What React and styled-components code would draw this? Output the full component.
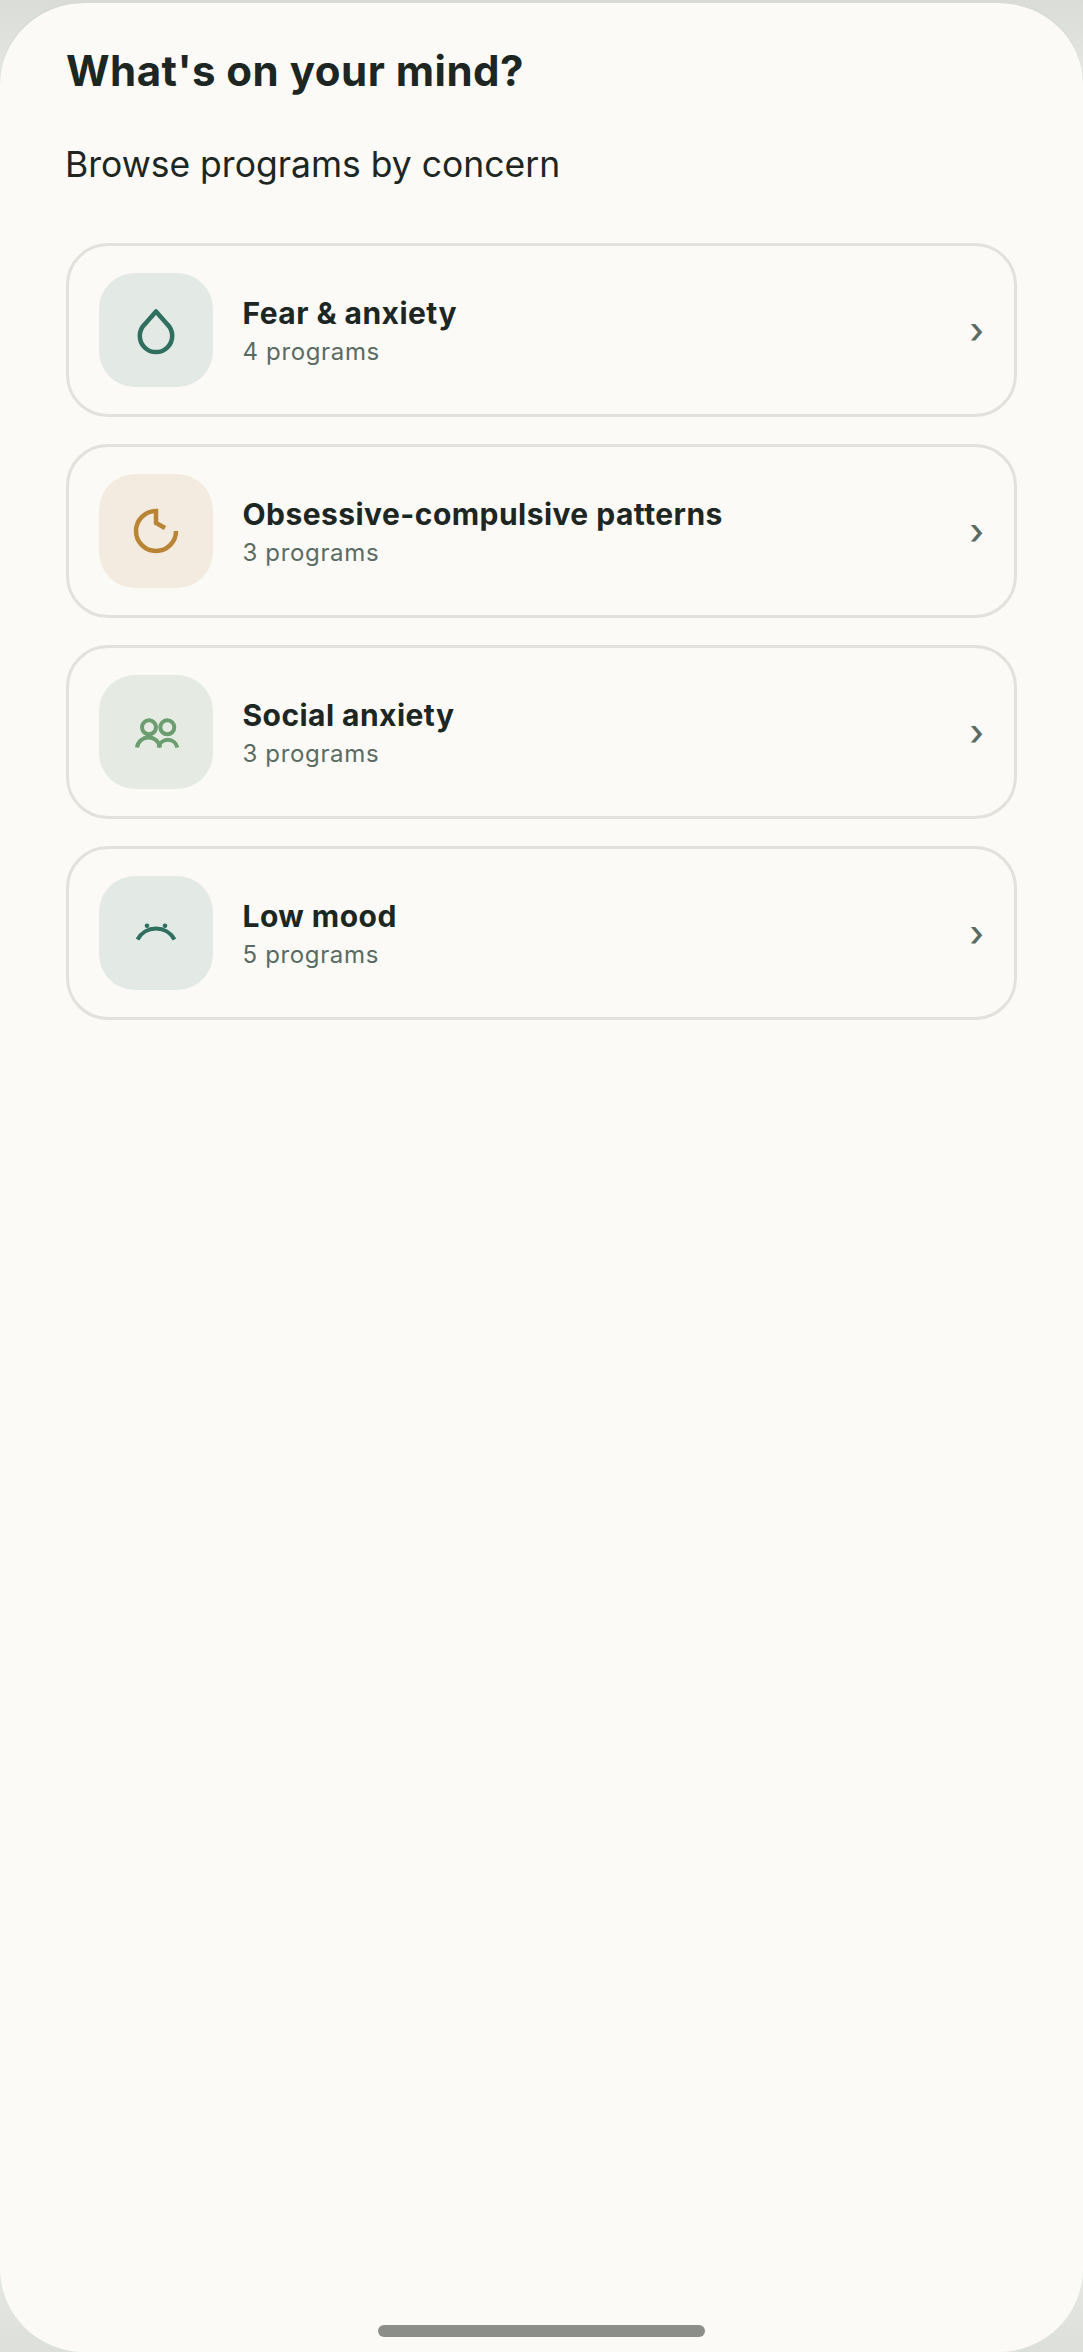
import styled, { createGlobalStyle } from "styled-components"

const GlobalStyle = createGlobalStyle`
  html, body {
    margin: 0;
    padding: 0;
  }
  body {
    background: linear-gradient(180deg, #dadcd7 0, #e6e8e4 84px, #e6e8e4 2268px, #dcdfda 100%);
  }
`;

const Screen = styled.div`
  box-sizing: border-box;
  border-top: 3px solid #d9dcd6;
  height: 2352px;
  background: #fbfaf6;
  background-clip: padding-box;
  border-radius: 84px;
  display: flex;
  flex-direction: column;
  padding: 0 66px 15px;
  font-family: Inter, "Liberation Sans", sans-serif;
`;

const Title = styled.h1`
  margin: 42px 0 0;
  font-size: 42px;
  line-height: 51px;
  font-weight: 700;
  letter-spacing: 0.5px;
  color: #1d2622;
`;

const Subtitle = styled.p`
  margin: 46px -1px 0;
  font-size: 35.5px;
  line-height: 45px;
  font-weight: 400;
  color: #1d2622;
`;

const List = styled.div`
  display: flex;
  flex-direction: column;
  gap: 27px;
  margin-top: 56px;
  flex: 1;
`;

const Card = styled.div`
  box-sizing: border-box;
  height: 174px;
  border: 3px solid #e2e2dc;
  border-radius: 42px;
  padding: 0 30px;
  display: flex;
  align-items: center;
  gap: 30px;
`;

const IconBox = styled.div`
  width: 114px;
  height: 114px;
  border-radius: 36px;
  background: ${(p) => p.$bg};
  color: ${(p) => p.$color};
  display: flex;
  align-items: center;
  justify-content: center;
  flex-shrink: 0;
`;

const CardText = styled.div`
  flex: 1;
  display: flex;
  flex-direction: column;
  gap: 6px;
  margin-top: 1px;
  margin-left: -0.5px;
`;

const CardTitle = styled.div`
  font-size: 30px;
  line-height: 36px;
  font-weight: 700;
  letter-spacing: 0.45px;
  color: #1d2622;
`;

const CardMeta = styled.div`
  font-size: 24px;
  line-height: 30px;
  letter-spacing: 0.65px;
  color: #5a6b63;
`;

const Chevron = styled.span`
  font-size: 36px;
  line-height: 44px;
  font-weight: 500;
  color: #5a6b63;
`;

const HomeBar = styled.div`
  width: 327px;
  height: 12px;
  border-radius: 6px;
  background: #8b8e89;
  align-self: center;
`;

const Icon = ({ children }) => (
  <svg width="60" height="60" viewBox="0 0 60 60" fill="none" stroke="currentColor" strokeWidth="4">
    {children}
  </svg>
)

const concerns = [
  {
    title: "Fear & anxiety",
    count: "4 programs",
    bg: "#e3e9e5",
    color: "#2f6f5e",
    icon: <path d="M30 11.5 L41 24 A16.2 16.2 0 1 1 19 24 Z" strokeWidth="4.5" strokeLinejoin="round" />,
  },
  {
    title: "Obsessive-compulsive patterns",
    count: "3 programs",
    bg: "#f3ebdf",
    color: "#b98436",
    icon: <path d="M50 30 A20 20 0 1 1 30 10 V22 L39 27" strokeWidth="4.5" />,
  },
  {
    title: "Social anxiety",
    count: "3 programs",
    bg: "#e5ebe2",
    color: "#6b9d6f",
    icon: (
      <>
        <circle cx="23" cy="25.3" r="7" />
        <circle cx="41.3" cy="25.3" r="7" />
        <path d="M11 45.5 A11.6 11.6 0 0 1 34 45.5" />
        <path d="M32.5 45.5 A9.6 9.6 0 0 1 51.3 45.5" />
      </>
    ),
  },
  {
    title: "Low mood",
    count: "5 programs",
    bg: "#e3e9e5",
    color: "#2f6f5e",
    icon: (
      <>
        <path d="M11.5 36.5 A21 21 0 0 1 48.5 36.5" />
        <circle cx="21" cy="22.7" r="2.3" fill="currentColor" stroke="none" />
        <circle cx="39" cy="22.7" r="2.3" fill="currentColor" stroke="none" />
      </>
    ),
  },
]

function App() {
  return (
    <>
      <GlobalStyle />
      <Screen>
        <Title>What's on your mind?</Title>
        <Subtitle>Browse programs by concern</Subtitle>
        <List>
          {concerns.map((c) => (
            <Card key={c.title}>
              <IconBox $bg={c.bg} $color={c.color}>
                <Icon>{c.icon}</Icon>
              </IconBox>
              <CardText>
                <CardTitle>{c.title}</CardTitle>
                <CardMeta>{c.count}</CardMeta>
              </CardText>
              <Chevron>›</Chevron>
            </Card>
          ))}
        </List>
        <HomeBar />
      </Screen>
    </>
  )
}

export default App
